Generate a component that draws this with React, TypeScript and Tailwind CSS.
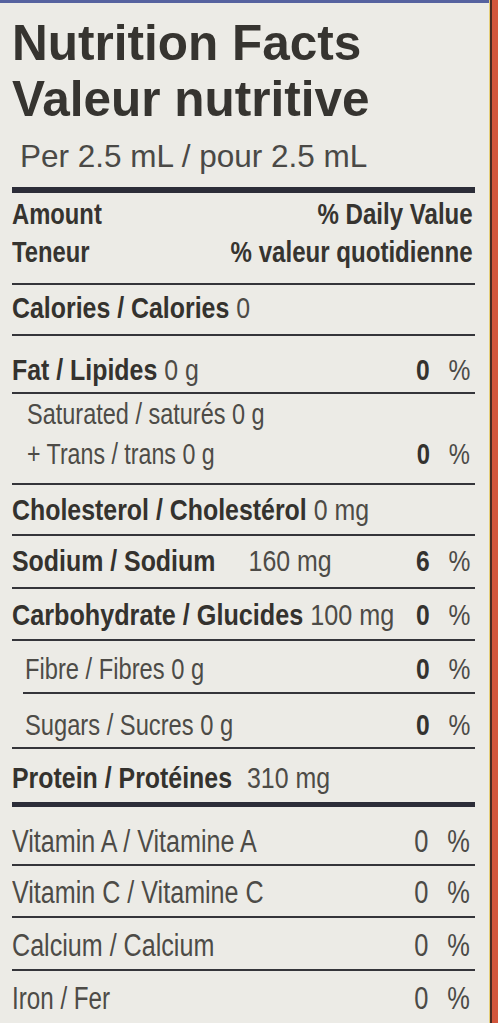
import type { ReactNode } from 'react';

const narrow = "font-['Liberation_Sans',Arial,sans-serif]";

interface RowProps {
  className: string;
  children: ReactNode;
  squeeze?: string;
  dv?: string;
  dvBold?: boolean;
}

// one nutrient line, label left and % daily value on the right
function Row({ className, children, squeeze = 'scale-x-[0.83]', dv, dvBold }: RowProps) {
  return (
    <div className={`flex items-start justify-between ${className}`}>
      <div className={`min-w-0 flex-1 origin-left whitespace-nowrap ${squeeze}`}>{children}</div>
      {dv && (
        <div className="flex shrink-0 origin-right scale-x-[0.82] pr-[6px]">
          <span className={dvBold ? 'font-bold text-[#33322f]' : 'text-[#4b4a46]'}>{dv}</span>
          <span className="ml-[23px] text-[#4b4a46]">%</span>
        </div>
      )}
    </div>
  );
}

const B = ({ children }: { children: ReactNode }) => (
  <span className="font-bold text-[#34322e]">{children}</span>
);

export default function App() {
  return (
    <div className="flex h-[1023px] w-[498px] overflow-hidden bg-[#ecebe6]">
      <div className="flex w-[489px] flex-col border-t-[3px] border-[#56629f] bg-[#ecebe6] pl-[12px] pr-[14px]">
        <h1 className="pt-[12px] font-['Liberation_Sans',sans-serif] text-[49.5px] font-bold leading-[56px] text-[#363430]">
          Nutrition Facts
          <br />
          Valeur nutritive
        </h1>
        <p className="mt-[11px] pl-[8px] font-['Liberation_Sans',sans-serif] text-[31.5px] leading-[36px] text-[#4a4946]">
          Per 2.5 mL / pour 2.5 mL
        </p>
        <div className="mt-[13px] h-[6px] bg-[#2c2d38]" />

        <div className={`${narrow} text-[29px] font-bold leading-[38px] text-[#363430]`}>
          <div className="flex justify-between pt-[2px] pb-[12px] pr-[2px]">
            <div className="origin-left scale-x-[0.82] whitespace-nowrap">
              <div>Amount</div>
              <div>Teneur</div>
            </div>
            <div className="origin-right scale-x-[0.83] whitespace-nowrap text-right">
              <div>% Daily Value</div>
              <div>% valeur quotidienne</div>
            </div>
          </div>
        </div>

        <div className={`${narrow} text-[30px] leading-[30px] text-[#4d4b47]`}>
          <Row className="h-[51px] border-t-2 border-[#35353a] pt-[8px]">
            <B>Calories / Calories</B> 0
          </Row>
          <Row className="h-[58px] border-t-2 border-[#35353a] pt-[19px]" dv="0" dvBold>
            <B>Fat / Lipides</B> 0 g
          </Row>
          <div className="h-[91px] border-t-2 border-[#35353a] pl-[15px] text-[29px] leading-[40px]">
            <Row className="" squeeze="scale-x-[0.81]">
              Saturated / saturés 0 g
            </Row>
            <Row className="" squeeze="scale-x-[0.8]" dv="0" dvBold>
              + Trans / trans 0 g
            </Row>
          </div>
          <Row className="h-[51px] border-t-2 border-[#35353a] pt-[10px]">
            <B>Cholesterol / Cholestérol</B> 0 mg
          </Row>
          <Row className="h-[53px] border-t-2 border-[#35353a] pt-[10px]" dv="6" dvBold>
            <B>Sodium / Sodium</B>
            <span className="ml-[40px]">160 mg</span>
          </Row>
          <Row className="h-[52px] border-t-2 border-[#35353a] pt-[11px]" squeeze="scale-x-[0.84]" dv="0" dvBold>
            <B>Carbohydrate / Glucides</B> 100 mg
          </Row>
          <Row className="h-[53px] border-t-2 border-[#35353a] pt-[13px] pl-[13px]" squeeze="scale-x-[0.79]" dv="0" dvBold>
            Fibre / Fibres 0 g
          </Row>
          <div className="ml-[11px] h-[55px] border-t-2 border-[#35353a] pt-[16px] pl-[2px]">
            <Row className="" squeeze="scale-x-[0.79]" dv="0" dvBold>
              Sugars / Sucres 0 g
            </Row>
          </div>
          <Row className="h-[55px] border-t-2 border-[#35353a] pt-[14px]">
            <B>Protein / Protéines</B>
            <span className="ml-[18px]">310 mg</span>
          </Row>
          <div className="h-[5px] bg-[#2c2d38]" />
          <Row className="h-[57px] pt-[19px] text-[31px] leading-[31px]" squeeze="scale-x-[0.81]" dv="0">
            Vitamin A / Vitamine A
          </Row>
          <Row className="h-[52px] border-t-2 border-[#35353a] pt-[11px] text-[31px] leading-[31px]" squeeze="scale-x-[0.81]" dv="0">
            Vitamin C / Vitamine C
          </Row>
          <Row className="h-[53px] border-t-2 border-[#35353a] pt-[12px] text-[31px] leading-[31px]" squeeze="scale-x-[0.81]" dv="0">
            Calcium / Calcium
          </Row>
          <Row className="h-[52px] border-t-2 border-[#35353a] pt-[12px] text-[31px] leading-[31px]" squeeze="scale-x-[0.78]" dv="0">
            Iron / Fer
          </Row>
        </div>
      </div>
      <div className="w-[1px] bg-[#e6cf78]" />
      <div className="w-[2px] bg-[#4a2b22]" />
      <div className="flex-1 bg-[#d2553c]" />
    </div>
  );
}
